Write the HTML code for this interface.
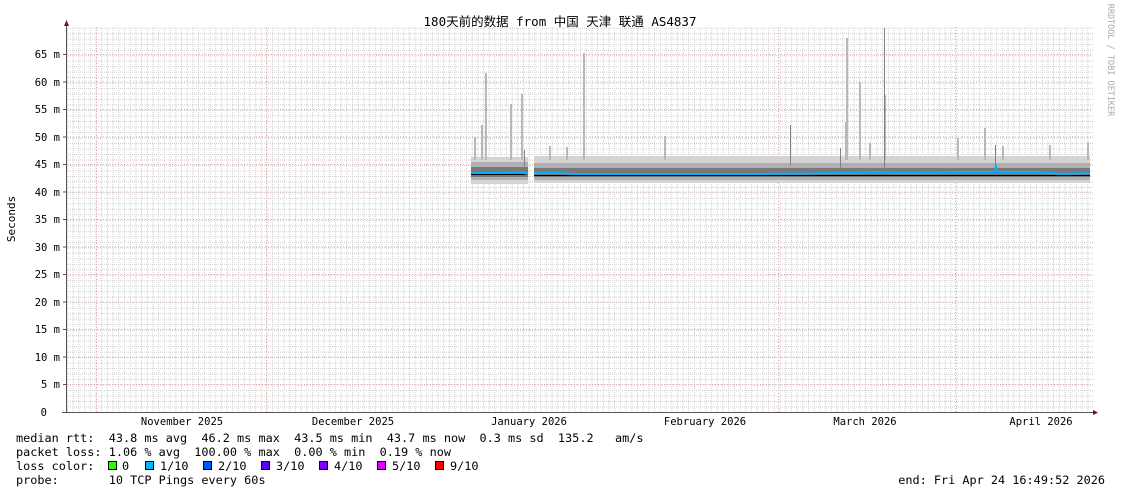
<!DOCTYPE html>
<html><head><meta charset="utf-8"><style>
html,body{margin:0;padding:0;background:#fff;width:1121px;height:494px;overflow:hidden}
svg text{font-family:"DejaVu Sans Mono","Liberation Mono","Noto Sans CJK SC",monospace;font-size:10.5px;fill:#000}
svg .lg text{font-size:11.85px}
svg .xl text{font-size:10.5px}
</style></head><body>
<svg width="1121" height="494" xmlns="http://www.w3.org/2000/svg">
<defs>
<pattern id="vg" x="67" y="0" width="5.7" height="4" patternUnits="userSpaceOnUse"><rect x="0" y="0" width="1" height="1" fill="#d0d0d0"/><rect x="0" y="2" width="1" height="1" fill="#d0d0d0"/></pattern>
<pattern id="hg" x="0" y="412" width="4" height="5.49" patternUnits="userSpaceOnUse"><rect x="0" y="0" width="1" height="1" fill="#d0d0d0"/><rect x="2" y="0" width="1" height="1" fill="#d0d0d0"/></pattern>
</defs>
<rect x="67" y="27" width="1026" height="385" fill="url(#vg)"/>
<rect x="67" y="27" width="1026" height="385" fill="url(#hg)"/>
<g stroke="#f0a0a0" stroke-width="1" stroke-dasharray="1,2">
<line x1="67" x2="1093" y1="384.5" y2="384.5"/><line x1="67" x2="1093" y1="357" y2="357"/><line x1="67" x2="1093" y1="329.5" y2="329.5"/><line x1="67" x2="1093" y1="302" y2="302"/><line x1="67" x2="1093" y1="274.5" y2="274.5"/><line x1="67" x2="1093" y1="247" y2="247"/><line x1="67" x2="1093" y1="219.5" y2="219.5"/><line x1="67" x2="1093" y1="192" y2="192"/><line x1="67" x2="1093" y1="164.5" y2="164.5"/><line x1="67" x2="1093" y1="137" y2="137"/><line x1="67" x2="1093" y1="109.5" y2="109.5"/><line x1="67" x2="1093" y1="82" y2="82"/><line x1="67" x2="1093" y1="54.5" y2="54.5"/>
<line x1="96.5" x2="96.5" y1="27" y2="412"/><line x1="266.5" x2="266.5" y1="27" y2="412"/><line x1="778.5" x2="778.5" y1="27" y2="412"/><line x1="955.5" x2="955.5" y1="27" y2="412"/>
</g>
<g>
<rect x="471" y="157" width="57" height="27" fill="#d4d4d4"/><rect x="534" y="156" width="556" height="27" fill="#d4d4d4"/>
<rect x="471" y="162" width="57" height="18" fill="#b0b0b0"/><rect x="534" y="163" width="556" height="17" fill="#b0b0b0"/>
<rect x="471" y="167" width="57" height="10" fill="#787878"/><rect x="534" y="168" width="556" height="9" fill="#787878"/>
</g>
<g stroke="#b8b8b8" stroke-width="2">
<line x1="475" x2="475" y1="137" y2="160"/><line x1="482" x2="482" y1="125" y2="160"/><line x1="486" x2="486" y1="73" y2="160"/><line x1="511" x2="511" y1="104" y2="160"/><line x1="522" x2="522" y1="94" y2="160"/><line x1="584" x2="584" y1="53" y2="160"/><line x1="550" x2="550" y1="146" y2="160"/><line x1="567" x2="567" y1="147" y2="160"/><line x1="665" x2="665" y1="136" y2="160"/><line x1="847" x2="847" y1="38" y2="160"/><line x1="846" x2="846" y1="122" y2="160"/><line x1="860" x2="860" y1="82" y2="160"/><line x1="885" x2="885" y1="95" y2="160"/><line x1="870" x2="870" y1="143" y2="160"/><line x1="958" x2="958" y1="138" y2="160"/><line x1="985" x2="985" y1="128" y2="160"/><line x1="1003" x2="1003" y1="146" y2="160"/><line x1="1088" x2="1088" y1="142" y2="160"/><line x1="1050" x2="1050" y1="145" y2="160"/>
</g>
<g stroke="#808080" stroke-width="1">
<line x1="790.5" x2="790.5" y1="125" y2="165"/><line x1="884.5" x2="884.5" y1="28" y2="170"/><line x1="840.5" x2="840.5" y1="148" y2="170"/><line x1="995.5" x2="995.5" y1="145" y2="170"/><line x1="524.5" x2="524.5" y1="150" y2="175"/>
</g>
<rect x="471" y="174" width="57" height="1" fill="#000"/><rect x="534" y="175" width="556" height="1" fill="#000"/>
<polyline fill="none" stroke="#00b0ff" stroke-width="2" points="471,173 500,173 520,172 528,174"/>
<polyline fill="none" stroke="#00b0ff" stroke-width="2" points="534,173 560,173 575,174 600,174 680,174 760,174 840,173 880,172 900,173 960,172 994,172 996,167 998,172 1040,172 1060,174 1090,173"/>
<line x1="66.5" x2="66.5" y1="24" y2="413" stroke="#555"/>
<line x1="62" x2="1095" y1="412.5" y2="412.5" stroke="#555"/>
<polygon points="64,26 69,26 66.5,20" fill="#801010"/>
<polygon points="1093,410 1093,415 1098,412.5" fill="#801010"/>
<g stroke="#555"><line x1="63" x2="67" y1="384.5" y2="384.5"/><line x1="63" x2="67" y1="357" y2="357"/><line x1="63" x2="67" y1="329.5" y2="329.5"/><line x1="63" x2="67" y1="302" y2="302"/><line x1="63" x2="67" y1="274.5" y2="274.5"/><line x1="63" x2="67" y1="247" y2="247"/><line x1="63" x2="67" y1="219.5" y2="219.5"/><line x1="63" x2="67" y1="192" y2="192"/><line x1="63" x2="67" y1="164.5" y2="164.5"/><line x1="63" x2="67" y1="137" y2="137"/><line x1="63" x2="67" y1="109.5" y2="109.5"/><line x1="63" x2="67" y1="82" y2="82"/><line x1="63" x2="67" y1="54.5" y2="54.5"/></g>
<g text-anchor="end">
<text x="47" y="416">0</text><text x="60" y="388">5 m</text><text x="60" y="361">10 m</text><text x="60" y="333">15 m</text><text x="60" y="306">20 m</text><text x="60" y="278">25 m</text><text x="60" y="251">30 m</text><text x="60" y="223">35 m</text><text x="60" y="196">40 m</text><text x="60" y="168">45 m</text><text x="60" y="141">50 m</text><text x="60" y="113">55 m</text><text x="60" y="86">60 m</text><text x="60" y="58">65 m</text>
</g>
<text x="15" y="219" text-anchor="middle" transform="rotate(-90 15 219)" style="font-size:11px">Seconds</text>
<text x="560" y="26" text-anchor="middle" style="font-size:12.5px">180天前的数据 from 中国 天津 联通 AS4837</text>
<text x="1108" y="60" text-anchor="middle" transform="rotate(90 1108 60)" style="font-size:8.5px;fill:#aaa">RRDTOOL / TOBI OETIKER</text>
<g text-anchor="middle" class="xl">
<text x="182" y="425">November 2025</text><text x="353" y="425">December 2025</text><text x="529" y="425">January 2026</text><text x="705" y="425">February 2026</text><text x="865" y="425">March 2026</text><text x="1041" y="425">April 2026</text>
</g>
<g class="lg">
<text x="16" y="442" xml:space="preserve">median rtt:  43.8 ms avg  46.2 ms max  43.5 ms min  43.7 ms now  0.3 ms sd  135.2   am/s</text>
<text x="16" y="456" xml:space="preserve">packet loss: 1.06 % avg  100.00 % max  0.00 % min  0.19 % now</text>
<text x="16" y="470" xml:space="preserve">loss color:</text>
<text x="16" y="484" xml:space="preserve">probe:       10 TCP Pings every 60s</text>
<text x="1105" y="484" text-anchor="end">end: Fri Apr 24 16:49:52 2026</text>
<text x="122" y="470">0</text><text x="160" y="470">1/10</text><text x="218" y="470">2/10</text><text x="276" y="470">3/10</text><text x="334" y="470">4/10</text><text x="392" y="470">5/10</text><text x="450" y="470">9/10</text>
</g>
<g stroke="#000" stroke-width="1">
<rect x="108.5" y="461.5" width="8" height="8" fill="#26ff00"/><rect x="145.5" y="461.5" width="8" height="8" fill="#00b8ff"/><rect x="203.5" y="461.5" width="8" height="8" fill="#0059ff"/><rect x="261.5" y="461.5" width="8" height="8" fill="#5e00ff"/><rect x="319.5" y="461.5" width="8" height="8" fill="#7e00ff"/><rect x="377.5" y="461.5" width="8" height="8" fill="#dd00ff"/><rect x="435.5" y="461.5" width="8" height="8" fill="#ff0000"/>
</g>
</svg>
</body></html>
